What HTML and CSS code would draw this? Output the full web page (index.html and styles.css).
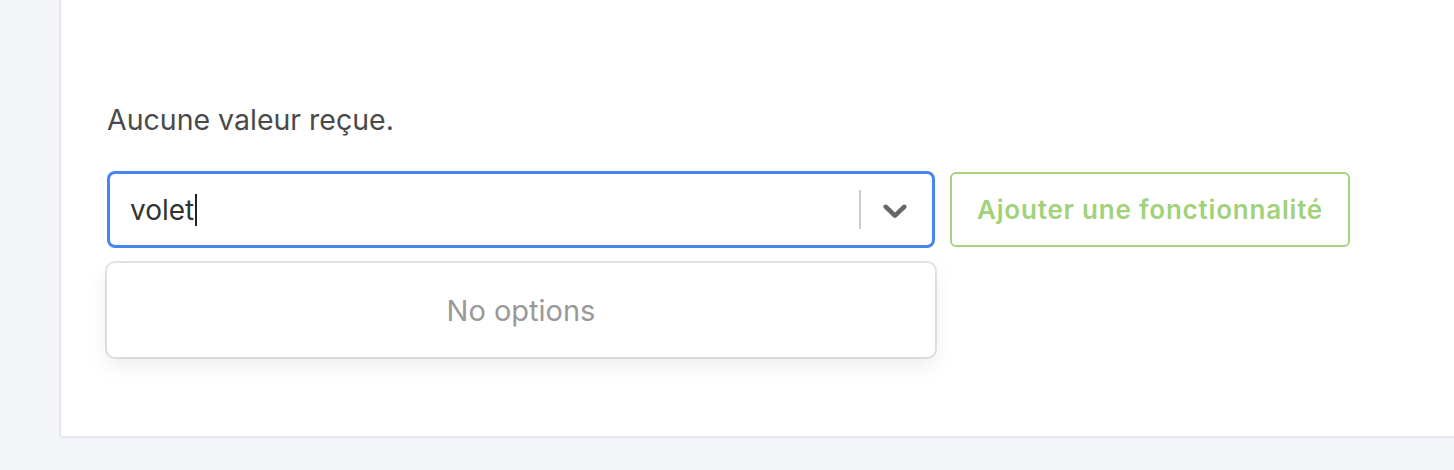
FILE: index.html
```html
<!DOCTYPE html>
<html lang="fr">
<head>
<meta charset="utf-8">
<title>Fonctionnalités</title>
<link rel="stylesheet" href="styles.css">
</head>
<body>
<main class="card">
  <p class="empty">Aucune valeur reçue.</p>
  <div class="row">
    <div class="select">
      <div class="control">
        <div class="value"><span>volet</span><span class="caret"></span></div>
        <div class="indicators">
          <span class="separator"></span>
          <span class="indicator">
            <svg viewBox="0 0 20 20" width="40" height="40" aria-hidden="true"><path d="M4.516 7.548c0.436-0.446 1.043-0.481 1.576 0l3.908 3.747 3.908-3.747c0.533-0.481 1.141-0.446 1.574 0 0.436 0.445 0.408 1.197 0 1.615-0.406 0.418-4.695 4.502-4.695 4.502-0.217 0.223-0.502 0.335-0.787 0.335s-0.57-0.112-0.789-0.335c0 0-4.287-4.084-4.695-4.502s-0.436-1.17 0-1.615z"/></svg>
          </span>
        </div>
      </div>
      <div class="menu">
        <div class="notice">No options</div>
      </div>
    </div>
    <button class="add" type="button">Ajouter une fonctionnalité</button>
  </div>
</main>
</body>
</html>
```
FILE: styles.css
```css
* { box-sizing: border-box; }
html, body { margin: 0; height: 100%; }
body {
  background: #f4f5f9;
  font-family: Inter, "Noto Sans", sans-serif;
  overflow: hidden;
}
.card {
  margin-left: 59px;
  height: 438px;
  background: #fff;
  border-left: 2px solid #e4e6ec;
  border-bottom: 2px solid #e4e6ec;
  border-bottom-left-radius: 4px;
  padding: 99px 0 0 46px;
}
.empty {
  margin: 0 0 30px;
  font-size: 28.5px;
  line-height: 42px;
  color: #4a4a4a;
}
.row {
  display: flex;
  align-items: center;
  gap: 15px;
}
.select {
  position: relative;
  width: 828px;
}
.control {
  display: flex;
  align-items: center;
  height: 77px;
  border: 3px solid #4686f0;
  border-radius: 8px;
  background: #fff;
}
.value {
  flex: 1;
  display: flex;
  align-items: center;
  padding-left: 20px;
  font-size: 28px;
  color: #333;
}
.caret {
  display: inline-block;
  width: 2px;
  height: 32px;
  margin-left: 1px;
  background: #222;
}
.indicators {
  display: flex;
  align-items: center;
  align-self: stretch;
}
.separator {
  width: 2px;
  height: 39px;
  background: #cccccc;
}
.indicator {
  display: flex;
  padding: 0 17px 0 14px;
  color: #666;
}
.indicator svg { fill: currentColor; display: block; }
.menu {
  position: absolute;
  top: 92px;
  left: 0;
  right: 0;
  background: #fff;
  border-radius: 8px;
  box-shadow: 0 0 0 2px rgba(0,0,0,0.1), 0 8px 22px rgba(0,0,0,0.08);
  padding: 8px 0;
}
.notice {
  padding: 16px 24px;
  height: 78px;
  display: flex;
  align-items: center;
  justify-content: center;
  font-size: 29px;
  color: #999;
}
.add {
  height: 75px;
  padding: 0 25px;
  background: #fff;
  border: 2px solid #a4d47f;
  border-radius: 6px;
  color: #9fd27a;
  font-family: Inter, "Noto Sans", sans-serif;
  font-size: 26px;
  letter-spacing: 0.8px;
  font-weight: 600;
}
```
